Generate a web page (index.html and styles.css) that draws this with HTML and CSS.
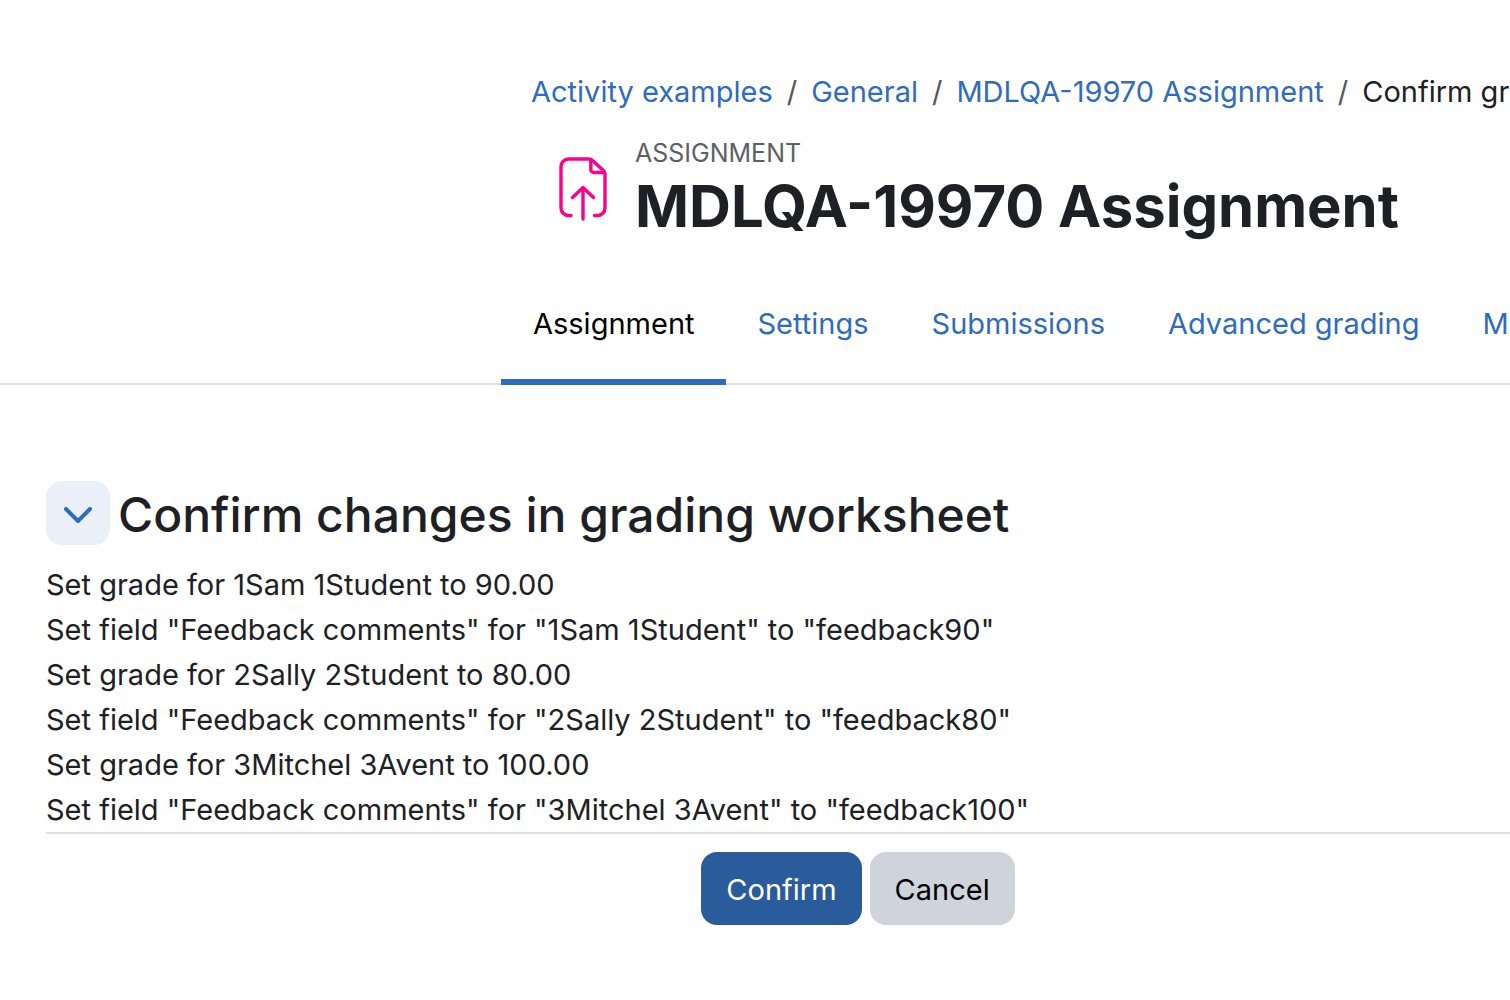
FILE: index.html
```html
<!DOCTYPE html>
<html lang="en">
<head>
  <meta charset="UTF-8" />
  <meta name="viewport" content="width=device-width, initial-scale=1.0" />
  <title>MDLQA-19970 Assignment</title>
  <link rel="stylesheet" href="styles.css">
</head>
<body>
  <header class="page-header">
    <nav aria-label="Breadcrumb">
      <ol class="breadcrumb">
        <li><a href="#">Activity examples</a></li>
        <li><a href="#">General</a></li>
        <li><a href="#">MDLQA-19970 Assignment</a></li>
        <li>Confirm grading</li>
      </ol>
    </nav>
    <div class="activity">
      <svg class="activity-icon" width="48" height="64" viewBox="0 0 48 64" fill="none" stroke="#ff0088" stroke-width="3.400" stroke-linecap="round" stroke-linejoin="round" aria-hidden="true">
        <path d="M12 58.500H9.500a7.500 7.500 0 0 1-7.500-7.500V9.500a7.500 7.500 0 0 1 7.500-7.500H30Q32 2 33.500 3.500L44.500 13.500Q46 15 46 17V51a7.500 7.500 0 0 1-7.500 7.500H35.500" />
        <path d="M31.800 3V12.500a3 3 0 0 0 3 3H45" />
        <path d="M24 62V30.500M13.500 40.500L24 30.500L34.500 40.500" />
      </svg>
      <div>
        <div class="activity-type">Assignment</div>
        <h1>MDLQA-19970 Assignment</h1>
      </div>
    </div>
  </header>

  <nav class="tabs" aria-label="Assignment navigation">
    <a class="tab active" href="#" aria-current="page">Assignment</a>
    <a class="tab" href="#">Settings</a>
    <a class="tab" href="#">Submissions</a>
    <a class="tab" href="#">Advanced grading</a>
    <a class="tab" href="#">More</a>
  </nav>

  <main>
    <form action="#">
      <div class="section-header">
        <button class="toggle" type="button" aria-label="Collapse" aria-expanded="true">
          <svg width="28" height="16" viewBox="0 0 28 16" fill="none" stroke="#2f6cba" stroke-width="4" stroke-linecap="round" stroke-linejoin="round" aria-hidden="true">
            <path d="M2 2L14 14L26 2" />
          </svg>
        </button>
        <h2>Confirm changes in grading worksheet</h2>
      </div>
      <ul class="changes">
        <li>Set grade for 1Sam 1Student to 90.00</li>
        <li>Set field "Feedback comments" for "1Sam 1Student" to "feedback90"</li>
        <li>Set grade for 2Sally 2Student to 80.00</li>
        <li>Set field "Feedback comments" for "2Sally 2Student" to "feedback80"</li>
        <li>Set grade for 3Mitchel 3Avent to 100.00</li>
        <li>Set field "Feedback comments" for "3Mitchel 3Avent" to "feedback100"</li>
      </ul>
      <div class="actions">
        <button class="btn btn-primary" type="submit">Confirm</button>
        <button class="btn btn-secondary" type="button">Cancel</button>
      </div>
    </form>
  </main>
</body>
</html>
```
FILE: styles.css
```css
body {
  margin: 0;
  overflow: hidden;
  background: #fff;
  color: #1d2125;
  font-family: Inter, "Liberation Sans", sans-serif;
  font-size: 29px;
  line-height: 45px;
}

a {
  color: #2f6cba;
  text-decoration: none;
}

h1, h2 {
  margin: 0;
  white-space: nowrap;
}

/* Header */
.page-header {
  padding: 69px 0 0 531px;
}

.breadcrumb {
  display: flex;
  margin: 0;
  padding: 0;
  list-style: none;
  white-space: nowrap;
}
.breadcrumb li + li::before {
  content: "/";
  padding: 0 14px;
  color: #50575e;
}

.activity {
  display: flex;
  gap: 28px;
  padding: 24px 0 0 28px;
}
.activity-icon {
  flex: none;
  margin-top: 19px;
}
.activity-type {
  color: #5c6166;
  font-size: 25px;
  line-height: 30px;
  text-transform: uppercase;
}
h1 {
  font-size: 58px;
  line-height: 76px;
}

/* Tabs */
.tabs {
  display: flex;
  margin-top: 42px;
  padding-left: 501px;
  border-bottom: 2px solid #dee2e6;
  white-space: nowrap;
}
.tab {
  margin-bottom: -2px;
  padding: 15px 31px 33px 32px;
  border-bottom: 6px solid transparent;
}
.tab.active {
  border-color: #2f6cba;
  color: #000;
}

/* Worksheet changes */
main {
  padding: 96px 0 0 46px;
}

.section-header {
  display: flex;
  align-items: center;
  gap: 8px;
}
.toggle {
  display: flex;
  flex: none;
  align-items: center;
  justify-content: center;
  width: 64px;
  height: 64px;
  padding: 4px 0 0;
  border: 0;
  border-radius: 16px;
  background: #e9f0f8;
}
h2 {
  padding-top: 4px;
  font-size: 48px;
  font-weight: 500;
  line-height: 60px;
}

.changes {
  margin: 0;
  padding: 17px 0 0;
  border-bottom: 2px solid #dee2e6;
  list-style: none;
}

.actions {
  display: flex;
  justify-content: center;
  gap: 8px;
  padding: 18px 0 0 160px;
}
.btn {
  padding: 15px 25px 13px;
  border: 0;
  border-radius: 16px;
  font: inherit;
}
.btn-primary {
  background: #2a5b9b;
  color: #fff;
}
.btn-secondary {
  background: #ced4da;
  color: #000;
}
```
